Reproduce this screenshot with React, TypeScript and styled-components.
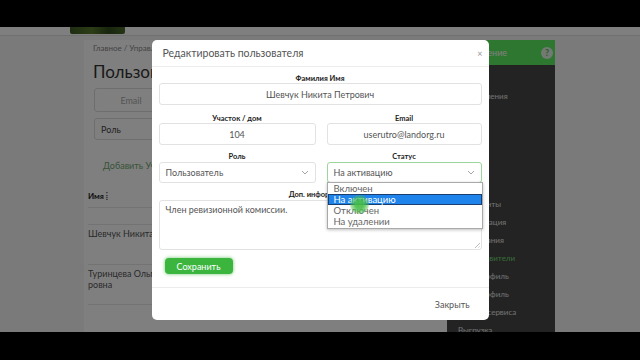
import styled, { createGlobalStyle } from "styled-components";

const GlobalStyle = createGlobalStyle`
  html, body {
    margin: 0;
    padding: 0;
    background: #000;
  }
  body {
    font-family: Lato, "Noto Sans", sans-serif;
  }
  * {
    box-sizing: border-box;
  }
`;

const menuTop = ["Уведомления"];
const menuBottom = [
  { label: "Документы", active: false },
  { label: "Информация", active: false },
  { label: "Голосования", active: false },
  { label: "Представители", active: true },
  { label: "Мой профиль", active: false },
  { label: "Наш профиль", active: false },
  { label: "Оплата сервиса", active: false },
  { label: "Выгрузка", active: false },
];

const statusOptions = ["Включен", "На активацию", "Отключен", "На удалении"];

const App = () => {
  return (
    <>
      <GlobalStyle />
      <Frame>
        <Screen>
          <TopBar>
            <Logo />
          </TopBar>
          <PageBody>
            <Main>
              <Breadcrumbs>Главное / Управление</Breadcrumbs>
              <PageTitle>Пользователи</PageTitle>
              <FilterCard>
                <FilterInput>Email</FilterInput>
                <FilterSelect>Роль</FilterSelect>
              </FilterCard>
              <AddLink>Добавить Участника</AddLink>
              <Table>
                <thead>
                  <tr>
                    <th>Имя ⁞</th>
                    <th>Участок</th>
                  </tr>
                </thead>
                <tbody>
                  <EmptyRow>
                    <td />
                    <td />
                  </EmptyRow>
                  <tr>
                    <td>Шевчук Никита Петрович</td>
                    <td>104</td>
                  </tr>
                  <tr>
                    <td>
                      Туринцева Ольга Викто
                      <br />
                      ровна
                    </td>
                    <td>58</td>
                  </tr>
                </tbody>
              </Table>
            </Main>
            <Sidebar>
              <SidebarHeader>
                <span>Управление</span>
                <HelpIcon>?</HelpIcon>
              </SidebarHeader>
              <MenuGroup>
                {menuTop.map((m) => (
                  <MenuItem key={m}>{m}</MenuItem>
                ))}
              </MenuGroup>
              <MenuGroup $gap>
                {menuBottom.map((m) => (
                  <MenuItem key={m.label} $active={m.active}>
                    {m.label}
                  </MenuItem>
                ))}
              </MenuGroup>
            </Sidebar>
          </PageBody>

          <Backdrop>
            <Modal>
              <ModalHeader>
                <ModalTitle>Редактировать пользователя</ModalTitle>
                <CloseButton>×</CloseButton>
              </ModalHeader>
              <ModalBody>
                <Field>
                  <Label>Фамилия Имя</Label>
                  <Input>Шевчук Никита Петрович</Input>
                </Field>
                <Row $first>
                  <Field>
                    <Label>Участок / дом</Label>
                    <Input>104</Input>
                  </Field>
                  <Field>
                    <Label>Email</Label>
                    <Input>userutro@landorg.ru</Input>
                  </Field>
                </Row>
                <Row>
                  <Field>
                    <Label $low>Роль</Label>
                    <Select>
                      <span>Пользователь</span>
                      <Chevron />
                    </Select>
                  </Field>
                  <Field>
                    <Label $low>Статус</Label>
                    <SelectWrap>
                      <Select $focused>
                        <span>На активацию</span>
                        <Chevron />
                      </Select>
                      <Dropdown>
                        {statusOptions.map((o, i) => (
                          <Option key={o} $selected={i === 1}>
                            {o}
                          </Option>
                        ))}
                        <ClickMark />
                      </Dropdown>
                    </SelectWrap>
                  </Field>
                </Row>
                <Field>
                  <Label $low>Доп. информация</Label>
                  <TextArea>
                    Член ревизионной комиссии.
                    <ResizeGrip />
                  </TextArea>
                </Field>
                <SaveButton>Сохранить</SaveButton>
              </ModalBody>
              <ModalFooter>
                <FooterButton>Закрыть</FooterButton>
              </ModalFooter>
            </Modal>
          </Backdrop>
        </Screen>
      </Frame>
    </>
  );
};

const Chevron = () => (
  <svg width="8" height="5" viewBox="0 0 8 5" fill="none">
    <path d="M1 1l3 3 3-3" stroke="#999" strokeWidth="0.9" />
  </svg>
);

const Frame = styled.div`
  width: 640px;
  height: 360px;
  background: #000;
  padding: 27px 0 28px;
  display: flex;
  flex-direction: column;
`;

const Screen = styled.div`
  position: relative;
  flex: 1;
  overflow: hidden;
  background: #f4f4f4;
`;

const TopBar = styled.div`
  height: 9px;
  background: #fff;
  border-bottom: 1px solid #e0e0e0;
  padding-left: 70px;
`;

const Logo = styled.div`
  width: 55px;
  height: 7px;
  border-radius: 0 0 2px 2px;
  background: linear-gradient(90deg, #3d5a22, #5a7a2e 40%, #2f4a1c 70%, #4a6a28);
`;

const PageBody = styled.div`
  display: flex;
  padding: 4px 0 0 84px;
  height: 296px;
`;

const Main = styled.div`
  width: 363px;
  background: #fff;
  padding: 3px 0 0 4px;
`;

const Breadcrumbs = styled.div`
  margin-left: 5px;
  font-size: 8px;
  line-height: 10px;
  color: #888;
`;

const PageTitle = styled.div`
  margin: 9px 0 0 5px;
  font-size: 17px;
  line-height: 20px;
  color: #333;
`;

const FilterCard = styled.div`
  width: 300px;
  background: #fff;
  padding: 6px 6px 10px;
  display: flex;
  flex-direction: column;
  gap: 6px;
`;

const FilterInput = styled.div`
  width: 150px;
  height: 24px;
  border: 1px solid #ddd;
  border-radius: 3px;
  font-size: 9px;
  color: #aaa;
  display: flex;
  align-items: center;
  justify-content: center;
  padding-right: 76px;
`;

const FilterSelect = styled.div`
  width: 150px;
  height: 22px;
  border: 1px solid #ddd;
  border-radius: 3px;
  font-size: 9px;
  color: #444;
  display: flex;
  align-items: center;
  padding-left: 6px;
`;

const AddLink = styled.div`
  margin: 10px 0 0 15px;
  font-size: 9px;
  line-height: 12px;
  color: #6fa86f;
`;

const Table = styled.table`
  margin-top: 18px;
  border-collapse: collapse;
  font-size: 9px;
  color: #555;

  th,
  td {
    border-bottom: 1px solid #e6e6e6;
    text-align: left;
    vertical-align: top;
    padding: 3px 4px 0 0;
  }

  th {
    height: 17px;
    padding-top: 1px;
    font-weight: bold;
    font-size: 8px;
    color: #222;
  }

  td:first-child {
    width: 120px;
    white-space: nowrap;
  }

  tbody tr {
    height: 40px;
  }
`;

const EmptyRow = styled.tr`
  && {
    height: 17px;
  }
`;

const Sidebar = styled.div`
  width: 108px;
  background: #474747;
  color: #d8d8d8;
`;

const SidebarHeader = styled.div`
  height: 25px;
  background: #5cef60;
  display: flex;
  align-items: center;
  justify-content: space-between;
  padding: 0 2px 0 11px;
  font-size: 9px;
  color: #fff;
`;

const HelpIcon = styled.div`
  width: 12px;
  height: 12px;
  border-radius: 50%;
  background: #e6f2e6;
  color: #5cb85c;
  font-size: 9px;
  font-weight: bold;
  display: flex;
  align-items: center;
  justify-content: center;
`;

const MenuGroup = styled.div<{ $gap?: boolean }>`
  padding-left: 11px;
  margin-top: ${(p) => (p.$gap ? "90px" : "22px")};
`;

const MenuItem = styled.div<{ $active?: boolean }>`
  font-size: 8px;
  line-height: 18px;
  white-space: nowrap;
  color: ${(p) => (p.$active ? "#6fd66f" : "#e0e0e0")};
`;

const Backdrop = styled.div`
  position: absolute;
  inset: 0;
  background: rgba(0, 0, 0, 0.5);
  display: flex;
  justify-content: center;
  align-items: flex-start;
  padding-top: 13px;
`;

const Modal = styled.div`
  width: 337px;
  height: 280px;
  background: #fff;
  border-radius: 5px;
  display: flex;
  flex-direction: column;
`;

const ModalHeader = styled.div`
  height: 27px;
  border-bottom: 1px solid #ececec;
  display: flex;
  align-items: center;
  justify-content: space-between;
  padding: 0 6px 0 11px;
`;

const ModalTitle = styled.div`
  font-size: 10.5px;
  color: #555;
`;

const CloseButton = styled.div`
  font-size: 9px;
  color: #999;
`;

const ModalBody = styled.div`
  padding: 7px 7px 13px;
  border-bottom: 1px solid #ececec;
  display: flex;
  flex-direction: column;
  gap: 7px;
`;

const Row = styled.div<{ $first?: boolean }>`
  display: grid;
  grid-template-columns: 157px 155px;
  column-gap: 11px;
  margin-top: ${(p) => (p.$first ? "2px" : "0")};
`;

const Field = styled.div`
  display: flex;
  flex-direction: column;
`;

const Label = styled.div<{ $low?: boolean }>`
  text-align: center;
  font-size: 7.5px;
  font-weight: bold;
  color: #222;
  line-height: 9px;
  margin-bottom: ${(p) => (p.$low ? "1px" : "0")};
`;

const Input = styled.div`
  height: 22px;
  border: 1px solid #e2e2e2;
  border-radius: 3px;
  display: flex;
  align-items: center;
  justify-content: center;
  font-size: 9px;
  color: #555;
`;

const SelectWrap = styled.div`
  position: relative;
`;

const Select = styled.div<{ $focused?: boolean }>`
  height: 21px;
  border: 1px solid ${(p) => (p.$focused ? "#9bd69b" : "#e2e2e2")};
  border-radius: 3px;
  display: flex;
  align-items: center;
  justify-content: space-between;
  padding: 0 6px;
  font-size: 9px;
  color: #555;
`;

const Dropdown = styled.div`
  position: absolute;
  top: 20px;
  left: 0;
  width: 156px;
  padding: 0 0 1px;
  background: #fff;
  border: 1px solid #a9a9a9;
  box-shadow: 0 1px 3px rgba(0, 0, 0, 0.25);
  z-index: 2;
`;

const Option = styled.div<{ $selected?: boolean }>`
  height: 11px;
  line-height: 9px;
  padding-left: 5px;
  font-size: 9.5px;
  color: ${(p) => (p.$selected ? "#fff" : "#666")};
  background: ${(p) => (p.$selected ? "#1e84ec" : "transparent")};
  border: 1px solid ${(p) => (p.$selected ? "#1b3e70" : "transparent")};
`;

const ClickMark = styled.div`
  position: absolute;
  left: 22px;
  top: 12px;
  width: 19px;
  height: 19px;
  border-radius: 50%;
  background: radial-gradient(circle, rgba(70, 190, 70, 0.9) 30%, rgba(70, 190, 70, 0.35) 70%, rgba(70, 190, 70, 0) 100%);
`;

const TextArea = styled.div`
  position: relative;
  height: 50px;
  border: 1px solid #e2e2e2;
  border-radius: 3px;
  padding: 3px 6px;
  font-size: 9px;
  color: #555;
`;

const ResizeGrip = styled.div`
  position: absolute;
  right: 1px;
  bottom: 1px;
  width: 5px;
  height: 5px;
  background: linear-gradient(135deg, transparent 45%, #bbb 50%, transparent 60%, transparent 70%, #bbb 75%, transparent 85%);
`;

const SaveButton = styled.div`
  align-self: flex-start;
  margin: 1px 0 0 6px;
  width: 68px;
  height: 16px;
  border-radius: 4px;
  background: #3cb53f;
  color: #fff;
  font-size: 9px;
  display: flex;
  align-items: center;
  justify-content: center;
  box-shadow: 0 0 3px 1px rgba(60, 181, 63, 0.45);
`;

const ModalFooter = styled.div`
  flex: 1;
  display: flex;
  align-items: center;
  justify-content: flex-end;
  padding: 0 19px 0 0;
`;

const FooterButton = styled.div`
  font-size: 9px;
  color: #555;
`;

export default App;
